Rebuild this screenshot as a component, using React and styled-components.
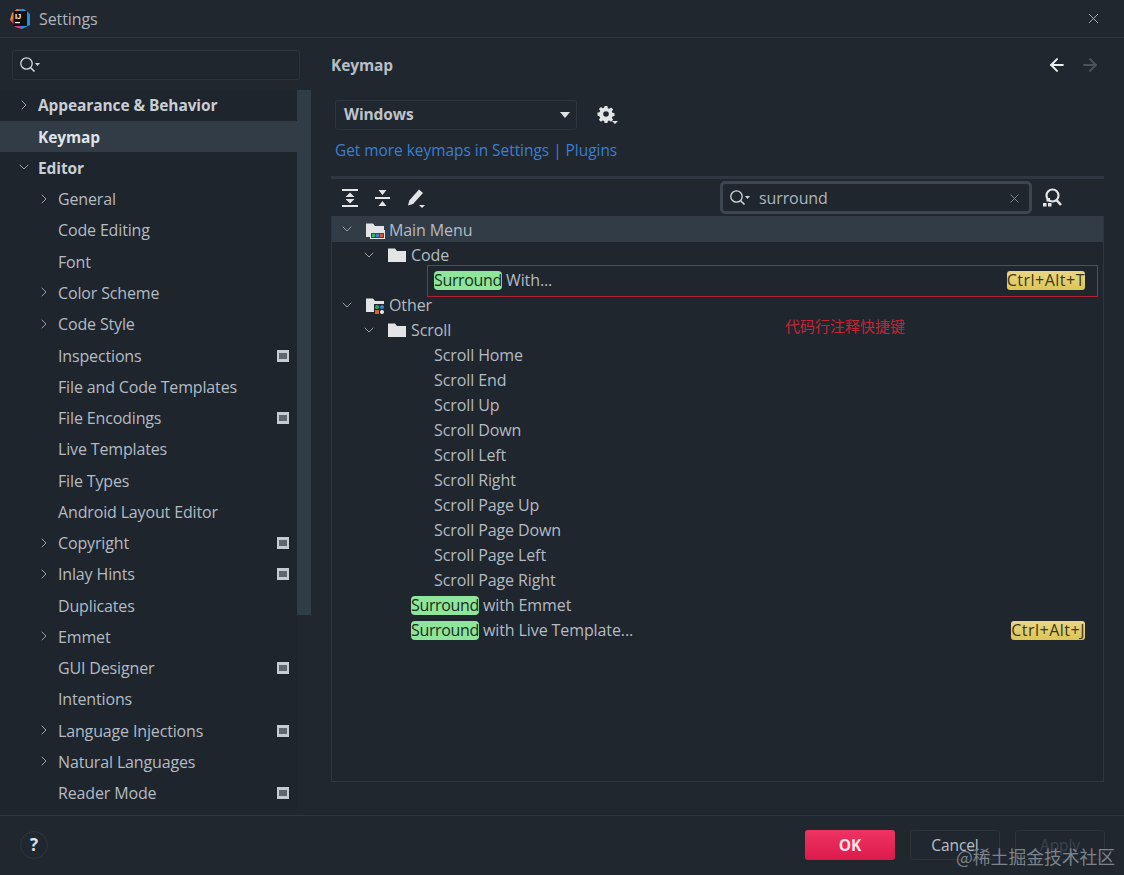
import React from "react";
import styled, { createGlobalStyle } from "styled-components";
import { ChevronRight, ChevronDown, X, ArrowLeft, ArrowRight } from "lucide-react";

const Global = createGlobalStyle`
  html, body { margin: 0; padding: 0; background: #20272f; }
  * { box-sizing: border-box; }
  body { font-family: "Open Sans", "Noto Sans", "Noto Sans CJK SC", sans-serif; }
`;

const Win = styled.div`
  position: relative; width: 1124px; height: 875px; overflow: hidden;
  display: flex; flex-direction: column; background: #20272f; color: #bcc3cb;
  font-size: 16px; letter-spacing: -0.1px;
`;
const TitleBar = styled.header`
  height: 38px; flex: none; display: flex; align-items: center; padding: 0 22px 0 9px;
  gap: 8px; border-bottom: 1px solid #2f3842; color: #aeb5bd;
`;
const Title = styled.div` flex: 1; font-size: 16px; `;
const Content = styled.div` flex: 1; min-height: 0; display: flex; `;
const Sidebar = styled.aside` width: 311px; flex: none; display: flex; flex-direction: column; padding-top: 12px; overflow: hidden; `;
const SearchBox = styled.div`
  height: 30px; margin: 0 11px 0 12px; flex: none; display: flex; align-items: center; padding-left: 6px;
  border: 1px solid #2c343e; border-radius: 3px; background: #1f262e;
`;
const SideBody = styled.div` flex: 1; min-height: 0; margin-top: 9.8px; display: flex; align-items: flex-start; `;
const SideTree = styled.div` width: 297px; flex: none; background: #1e252d; `;
const Thumb = styled.div` width: 14px; height: 525px; flex: none; background: #323c46; `;
const SideRow = styled.div`
  height: 31.27px; display: flex; align-items: center; position: relative;
  padding-left: ${p => (p.$level === 0 ? 38 : 58)}px;
  padding-right: 8px;
  font-weight: ${p => (p.$level === 0 ? 700 : 400)};
  font-size: ${p => (p.$level === 0 ? 15.5 : 16)}px;
  letter-spacing: ${p => (p.$level === 0 ? -0.1 : -0.15)}px;
  color: ${p => (p.$level === 0 ? "#c9ced4" : "#b4bbc3")};
  background: ${p => (p.$active ? "#323c46" : "transparent")};
  ${p => p.$active && "color: #dfe3e7;"}
`;
const SideArrow = styled.span`
  position: absolute; left: ${p => (p.$level === 0 ? 16 : 36)}px; top: 7px;
  display: flex; color: #98a0a8;
`;
const Label = styled.span` flex: 1; white-space: nowrap; `;
const Main = styled.main` flex: 1; min-width: 0; padding: 0 20px 0 20px; display: flex; flex-direction: column; `;
const HeadRow = styled.div` height: 54px; flex: none; display: flex; align-items: center; justify-content: space-between; padding: 0 4px 0 0; `;
const Heading = styled.h1` margin: 0; font-size: 15.5px; font-weight: 700; color: #b7bec6; `;
const Nav = styled.div` display: flex; gap: 13px; align-items: center; `;
const SchemeRow = styled.div` margin: 8px 0 0 4px; flex: none; display: flex; align-items: center; gap: 18px; `;
const Select = styled.div`
  width: 242px; height: 30px; display: flex; align-items: center; justify-content: space-between;
  padding: 0 5px 2px 8px; border: 1px solid #2c343e; border-radius: 3px; font-weight: 700; font-size: 15.5px; color: #bcc3cb;
`;
const Caret = styled.span`
  width: 0; height: 0; border-left: 5.5px solid transparent; border-right: 5.5px solid transparent;
  border-top: 6px solid #dfe3e7; margin: 2px 1px 0 0;
`;
const LinkLine = styled.a` display: block; margin: 10px 0 0 4px; height: 22px; line-height: 22px; color: #3b7fd0; flex: none; font-size: 15.4px; letter-spacing: 0; `;
const Divider = styled.div` height: 3px; margin-top: 14px; background: #2f3842; flex: none; `;
const Toolbar = styled.div` height: 37px; flex: none; display: flex; align-items: center; padding: 0 42px 0 10px; `;
const ToolGroup = styled.div` display: flex; gap: 15px; flex: 1; align-items: center; `;
const FilterBox = styled.div`
  width: 312px; height: 33px; display: flex; align-items: center; padding: 1px 7px 0 6px; gap: 8px;
  border: 3px solid #3c4651; border-radius: 5px; color: #aeb5bd; background: #1f262e;
  margin-right: 10px;
`;
const FilterText = styled.span` flex: 1; `;
const Panel = styled.section` height: 566px; flex: none; border: 1px solid #2f3842; border-top: none; background: #1f262e; `;
const KeyRow = styled.div`
  height: 25px; display: flex; align-items: center; position: relative; padding-right: 18px;
  padding-left: ${p => p.$pad}px; white-space: pre; color: #b4bbc3;
  background: ${p => (p.$sel ? "#323c46" : "transparent")};
`;
const FirstRow = styled(KeyRow)` height: 26px; padding-top: 2px; `;
const RowArrow = styled.span` position: absolute; left: ${p => p.$x}px; top: 50%; transform: translateY(-50%); display: flex; color: #98a0a8; `;
const FolderWrap = styled.span` display: flex; margin-right: 4px; margin-left: -1px; `;
const RowText = styled.span` flex: 1; `;
const Hit = styled.mark`
  background: #8fe59b; color: #17301d; border-radius: 4px; height: 19px; line-height: 19px; display: inline-block; letter-spacing: -0.35px;
`;
const Shortcut = styled.mark`
  background: linear-gradient(#ead586, #dcc656); color: #3d3714; border-radius: 3px; height: 19px; line-height: 19px;
  display: inline-block; letter-spacing: 0.5px; margin-top: 2px;
`;
const Footer = styled.footer`
  height: 60px; flex: none; border-top: 1px solid #2f3842; display: flex; align-items: center;
  padding: 0 19px 2px 20px;
`;
const Help = styled.div`
  width: 28px; height: 28px; border-radius: 50%; border: 1px solid #2c343e; display: flex; align-items: center; justify-content: center;
  color: #dfe3e7; font-weight: 700; font-size: 17px; margin-right: auto;
`;
const Btns = styled.div` display: flex; gap: 15px; `;
const Btn = styled.button`
  width: 90px; height: 30px; border-radius: 3px; font: inherit; font-size: 15.5px; letter-spacing: inherit; cursor: default;
  border: ${p => (p.$primary ? "none" : "1px solid #2c343e")};
  background: ${p => (p.$primary ? "linear-gradient(#ee3463, #dc1a4c)" : "transparent")};
  color: ${p => (p.$primary ? "#fbe3e9" : p.$disabled ? "#3a434d" : "#b9c0c8")};
  font-weight: ${p => (p.$primary ? 700 : 400)};
`;
const RedBox = styled.div`
  position: absolute; left: 427px; top: 265px; width: 671px; height: 32px; border: 1px solid #b32231; pointer-events: none;
`;
const RedNote = styled.div`
  position: absolute; left: 785px; top: 316px; font-size: 15px; line-height: 20px; letter-spacing: 0; color: #c22636;
  font-family: "Noto Sans CJK SC", sans-serif;
`;
const Watermark = styled.div`
  position: absolute; left: 956px; top: 844px; font-size: 17.8px; line-height: 24px; letter-spacing: 0; color: #7c838b;
  font-family: "Noto Sans CJK SC", sans-serif; white-space: nowrap;
`;

const Logo = () => (
  <svg width="22" height="22" viewBox="0 0 22 22">
    <path d="M8 1 L15 1 L21 6 L21 17 L13 21 L8 19 Z" fill="#1f8fe0" />
    <path d="M3 5 L8 1 L12 4 L5 16 L1 12 Z" fill="#f08a3c" />
    <path d="M2 12 L6 19 L13 21 L6 10 Z" fill="#ee2f7a" />
    <rect x="4.5" y="3" width="13.5" height="15" fill="#111" />
    <text x="6" y="10.5" fontSize="7.5" fontWeight="700" fill="#fff" fontFamily="Liberation Sans">IJ</text>
    <rect x="6" y="14" width="5" height="1.2" fill="#fff" />
  </svg>
);
const SearchIcon = () => (
  <svg width="22" height="18" viewBox="0 0 22 18" fill="none">
    <circle cx="7.5" cy="7.5" r="5.7" stroke="#d3d8dd" strokeWidth="1.3" />
    <path d="M11.7 11.7 L15.5 15.5" stroke="#d3d8dd" strokeWidth="1.6" />
    <path d="M16 7 h5 l-2.5 3 z" fill="#d3d8dd" />
  </svg>
);
const Gear = () => (
  <svg width="24" height="24" viewBox="0 0 24 24">
    <g fill="#e3e6e9">
      <path fillRule="evenodd" d="M9.6 3h2.8l.4 2.2 1.4.6 1.9-1.3 2 2-1.3 1.9.6 1.4 2.1.4v2.8l-2.1.4-.6 1.4 1.3 1.9-2 2-1.9-1.3-1.4.6-.4 2.1H9.6l-.4-2.1-1.4-.6-1.9 1.3-2-2 1.3-1.9-.6-1.4L2.5 12.400V9.600l2.100-.4.6-1.400-1.300-1.900 2-2 1.900 1.300 1.400-.6zM11 8.200a2.800 2.800 0 1 0 0 5.600 2.800 2.800 0 0 0 0-5.600z" />
      <path d="M17 18h6l-3 3z" />
    </g>
  </svg>
);
const Expand = () => (
  <svg width="18" height="20" viewBox="0 0 18 20" fill="#e3e6e9">
    <rect x="1" y="1" width="16" height="2" /><rect x="1" y="17" width="16" height="2" />
    <path d="M9 4.500l4.500 4.500h-9z M9 15.500l-4.500-4.500h9z" />
  </svg>
);
const Collapse = () => (
  <svg width="17" height="20" viewBox="0 0 17 20" fill="#e3e6e9">
    <rect x="1" y="9" width="15" height="2" />
    <path d="M4.500 2h8l-4 5z M4.500 18h8l-4-5z" />
  </svg>
);
const Pencil = () => (
  <svg width="20" height="20" viewBox="0 0 20 20" fill="#e3e6e9">
    <path d="M13 1.500l4 3.500-10 11-5 1.500 1.300-5z" />
    <path d="M13 17h6l-3 3z" />
  </svg>
);
const FindShortcut = () => (
  <svg width="20" height="20" viewBox="0 0 20 20" fill="none">
    <circle cx="10.500" cy="7.500" r="6" stroke="#e3e6e9" strokeWidth="2.200" />
    <path d="M14.500 12l4.500 5" stroke="#e3e6e9" strokeWidth="2.600" />
    <g fill="#e3e6e9"><rect x="4.500" y="10" width="3.500" height="3.500" /><rect x="1" y="15" width="3.500" height="3.500" /><rect x="6" y="15" width="3.500" height="3.500" /></g>
  </svg>
);
const Badge = styled.span`
  width: 12px; height: 12px; flex: none; background: #c5cbd1; display: flex; align-items: center; justify-content: center;
  &::after { content: ""; width: 8px; height: 6px; background: #5e6670; }
`;
const Folder = ({ children }) => (
  <svg width="20" height="18" viewBox="0 0 20 18">
    <path d="M1 2.500h7l2 2.500h9v11H1z" fill="#e2e4e6" />
    {children}
  </svg>
);
const MenuFolder = () => (
  <Folder>
    <rect x="5" y="9" width="15" height="9" fill="#e2e4e6" />
    <rect x="6" y="12" width="13" height="5" fill="#3b4a52" />
    <rect x="7" y="13" width="3" height="3" fill="#3fae6a" /><rect x="11" y="13" width="3" height="3" fill="#3a7fd0" /><rect x="15" y="13" width="3" height="3" fill="#d05a3a" />
  </Folder>
);
const OtherFolder = () => (
  <Folder>
    <rect x="9" y="8" width="11" height="10" fill="#1f262e" />
    <rect x="10" y="9" width="4" height="4" rx="1.500" fill="#2f9e62" /><rect x="15" y="9" width="4" height="4" rx="2" fill="#2e8ce0" />
    <rect x="10" y="14" width="4" height="4" fill="#dd5a2c" /><rect x="15" y="14" width="4" height="4" rx="2" fill="#e9ecef" />
  </Folder>
);

const side = [
  ["Appearance & Behavior", 0, "r"], ["Keymap", 0, "", 0, 1], ["Editor", 0, "d"], ["General", 1, "r"],
  ["Code Editing", 1], ["Font", 1], ["Color Scheme", 1, "r"], ["Code Style", 1, "r"], ["Inspections", 1, "", 1],
  ["File and Code Templates", 1], ["File Encodings", 1, "", 1], ["Live Templates", 1], ["File Types", 1],
  ["Android Layout Editor", 1], ["Copyright", 1, "r", 1], ["Inlay Hints", 1, "r", 1], ["Duplicates", 1],
  ["Emmet", 1, "r"], ["GUI Designer", 1, "", 1], ["Intentions", 1], ["Language Injections", 1, "r", 1],
  ["Natural Languages", 1, "r"], ["Reader Mode", 1, "", 1],
];
const scrolls = ["Home", "End", "Up", "Down", "Left", "Right", "Page Up", "Page Down", "Page Left", "Page Right"];

export default function App() {
  return (
    <Win>
      <Global />
      <TitleBar>
        <Logo />
        <Title>Settings</Title>
        <X size={17} strokeWidth={1.3} color="#aeb5bd" />
      </TitleBar>
      <Content>
        <Sidebar>
          <SearchBox><SearchIcon /></SearchBox>
          <SideBody>
            <SideTree>
              {side.map(([t, l, a, b, act]) => (
                <SideRow key={t} $level={l} $active={act}>
                  {a && (
                    <SideArrow $level={l}>
                      {a === "r" ? <ChevronRight size={16} strokeWidth={1.5} /> : <ChevronDown size={16} strokeWidth={1.5} />}
                    </SideArrow>
                  )}
                  <Label>{t}</Label>
                  {b ? <Badge /> : null}
                </SideRow>
              ))}
            </SideTree>
            <Thumb />
          </SideBody>
        </Sidebar>
        <Main>
          <HeadRow>
            <Heading>Keymap</Heading>
            <Nav>
              <ArrowLeft size={20} strokeWidth={2.4} color="#eef0f2" />
              <ArrowRight size={20} strokeWidth={2.4} color="#4b545e" />
            </Nav>
          </HeadRow>
          <SchemeRow>
            <Select>Windows<Caret /></Select>
            <Gear />
          </SchemeRow>
          <LinkLine>Get more keymaps in Settings | Plugins</LinkLine>
          <Divider />
          <Toolbar>
            <ToolGroup><Expand /><Collapse /><Pencil /></ToolGroup>
            <FilterBox>
              <SearchIcon />
              <FilterText>surround</FilterText>
              <X size={15} strokeWidth={1.3} color="#8d949c" />
            </FilterBox>
            <FindShortcut />
          </Toolbar>
          <Panel>
            <FirstRow $pad={34} $sel>
              <RowArrow $x={7}><ChevronDown size={16} strokeWidth={1.5} /></RowArrow>
              <FolderWrap><MenuFolder /></FolderWrap><RowText>Main Menu</RowText>
            </FirstRow>
            <KeyRow $pad={56}>
              <RowArrow $x={29}><ChevronDown size={16} strokeWidth={1.5} /></RowArrow>
              <FolderWrap><Folder /></FolderWrap><RowText>Code</RowText>
            </KeyRow>
            <KeyRow $pad={102}>
              <RowText><Hit>Surround</Hit> With...</RowText>
              <Shortcut>Ctrl+Alt+T</Shortcut>
            </KeyRow>
            <KeyRow $pad={34}>
              <RowArrow $x={7}><ChevronDown size={16} strokeWidth={1.5} /></RowArrow>
              <FolderWrap><OtherFolder /></FolderWrap><RowText>Other</RowText>
            </KeyRow>
            <KeyRow $pad={56}>
              <RowArrow $x={29}><ChevronDown size={16} strokeWidth={1.5} /></RowArrow>
              <FolderWrap><Folder /></FolderWrap><RowText>Scroll</RowText>
            </KeyRow>
            {scrolls.map(s => <KeyRow key={s} $pad={102}><RowText>Scroll {s}</RowText></KeyRow>)}
            <KeyRow $pad={79}><RowText><Hit>Surround</Hit> with Emmet</RowText></KeyRow>
            <KeyRow $pad={79}>
              <RowText><Hit>Surround</Hit> with Live Template...</RowText>
              <Shortcut>Ctrl+Alt+J</Shortcut>
            </KeyRow>
          </Panel>
        </Main>
      </Content>
      <Footer>
        <Help>?</Help>
        <Btns>
          <Btn $primary>OK</Btn>
          <Btn>Cancel</Btn>
          <Btn $disabled>Apply</Btn>
        </Btns>
      </Footer>
      <RedBox />
      <RedNote>代码行注释快捷键</RedNote>
      <Watermark>@稀土掘金技术社区</Watermark>
    </Win>
  );
}
